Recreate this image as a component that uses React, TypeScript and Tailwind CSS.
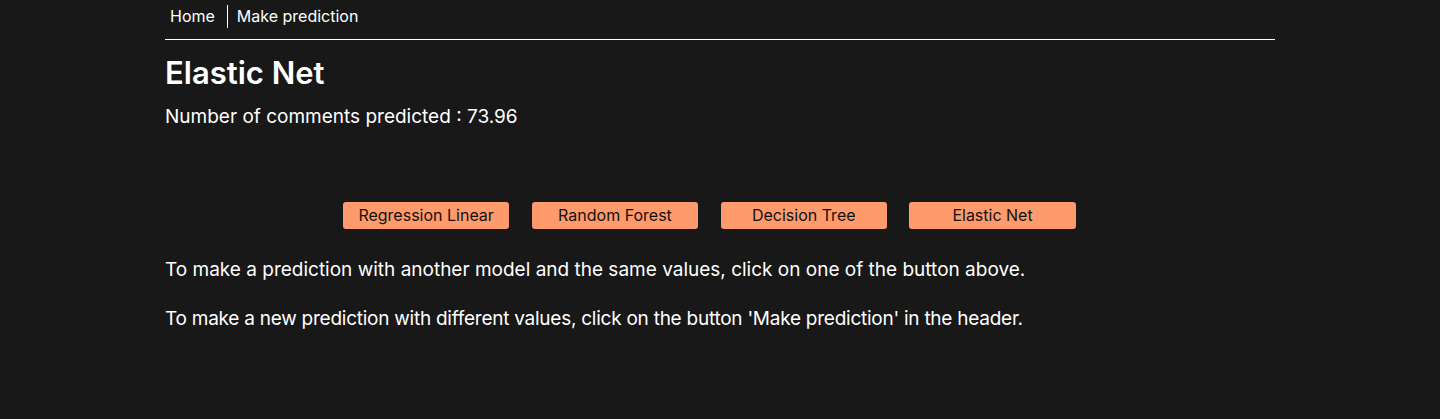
export default function App() {
  const buttons = ["Regression Linear", "Random Forest", "Decision Tree", "Elastic Net"];
  return (
    <div className="min-h-[419px] w-full bg-[#181818] text-white" style={{ fontFamily: "Inter, 'Noto Sans', sans-serif" }}>
      <div className="mx-auto max-w-[1140px] px-[15px]">
        <nav className="flex items-center border-b border-white pb-[11px] pt-[5px]">
          <a className="pl-[5px] pr-[12px] text-[16px] leading-[23px] text-white">Home</a>
          <div className="h-[23px] w-px bg-white" />
          <a className="px-[9px] text-[16px] leading-[23px] text-white">Make prediction</a>
        </nav>
        <h1 className="mt-[13px] text-[31px] font-semibold leading-[40px]">Elastic Net</h1>
        <p className="mt-[11px] text-[19px] leading-[26px]">Number of comments predicted : 73.96</p>
        <div className="mt-[72px] flex gap-[22.5px] pl-[178px]">
          {buttons.map((b) => (
            <button
              key={b}
              className="h-[27px] w-[166.3px] rounded-[3px] bg-[#ff9a6c] text-[16px] leading-[27px] text-[#111]"
            >
              {b}
            </button>
          ))}
        </div>
        <p className="mt-[28px] text-[19px] leading-[26px]">
          To make a prediction with another model and the same values, click on one of the button above.
        </p>
        <p className="mt-[23px] text-[19px] leading-[26px] tracking-[-0.25px]">
          To make a new prediction with different values, click on the button 'Make prediction' in the header.
        </p>
      </div>
    </div>
  );
}
